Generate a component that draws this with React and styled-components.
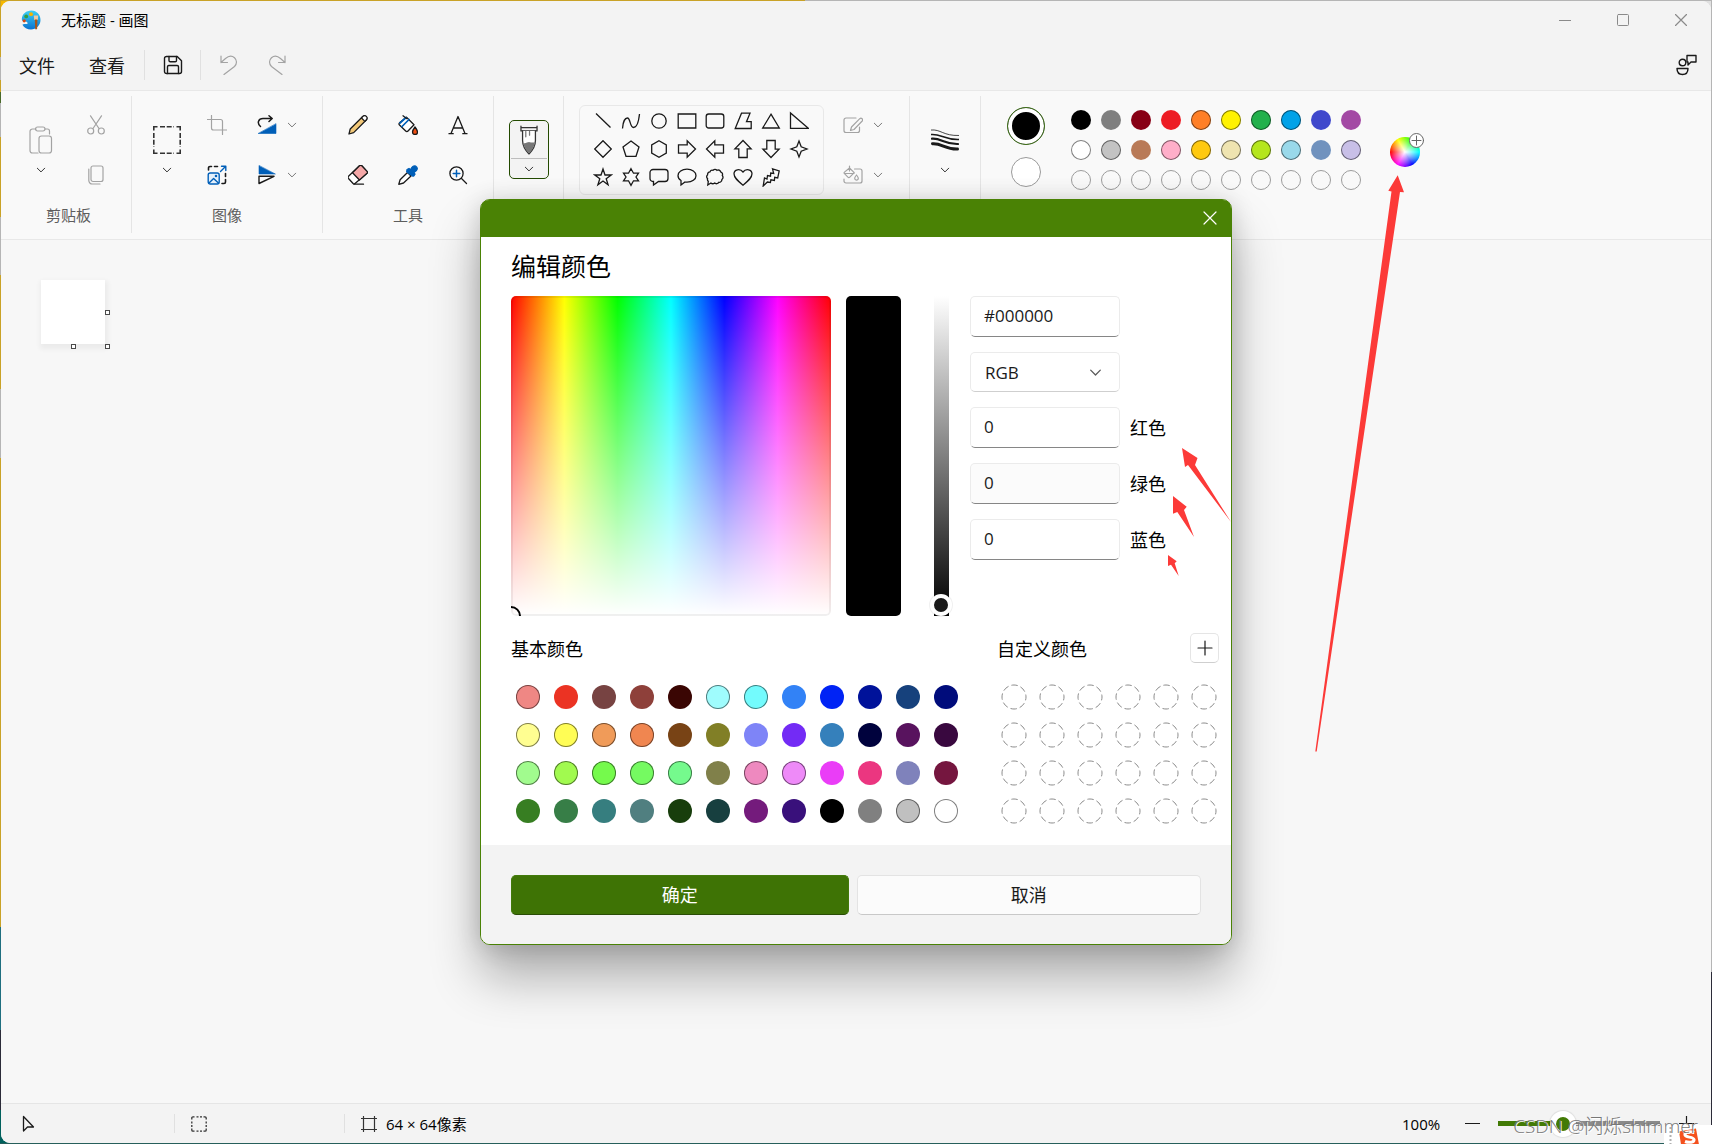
import React from "react";
import styled, { createGlobalStyle, css } from "styled-components";

const PALETTE = [
    "#000000", "#7f7f7f", "#880015", "#ed1c24", "#ff7f27", "#fff200", "#22b14c", "#00a2e8", "#3f48cc", "#a349a4",
    "#ffffff", "#c3c3c3", "#b97a57", "#ffaec9", "#ffc90e", "#efe4b0", "#b5e61d", "#99d9ea", "#7092be", "#c8bfe7"
]

const BASIC_COLORS = [
    "#ef8784", "#eb3323", "#774342", "#8e403a", "#3a0603", "#9ffcfd", "#73fbfd", "#3282f6", "#0023f5", "#00129a", "#16417c", "#000c7b",
    "#fffe91", "#fffd55", "#f09b59", "#f08650", "#784315", "#817f26", "#7e84f7", "#732bf5", "#3580bb", "#00023d", "#58135e", "#39083f",
    "#a1fb8e", "#a1fa4f", "#75fa4c", "#75fa61", "#75fa8d", "#80804a", "#ee89bf", "#ee8af8", "#ea3df7", "#eb3680", "#7f82bb", "#75163f",
    "#377e22", "#377e47", "#367e7f", "#507f80", "#183e0c", "#173f3f", "#741b7c", "#39107b", "#000000", "#808080", "#c0c0c0", "#ffffff"
]

// light swatches get an outline so they stay visible on the panel
const isLight = hex => {
    const [r, g, b] = [1, 3, 5].map(i => Math.pow(parseInt(hex.slice(i, i + 2), 16) / 255, 2.2))
    return 0.2126 * r + 0.7152 * g + 0.0722 * b > 0.3
}

const GlobalStyle = createGlobalStyle`
    *{
        box-sizing: border-box;
    }
    body{
        margin: 0;
        font-family: "Open Sans", "Noto Sans CJK SC", sans-serif;
        font-size: 15px;
        color: #1a1a1a;
    }
    button, input, select{
        font: inherit;
        color: inherit;
        margin: 0;
    }
    h1, h2, p{
        margin: 0;
        font-weight: inherit;
    }
    svg{
        display: block;
        flex: none;
    }
`

const Desktop = styled.div`
    position: relative;
    display: flex;
    min-height: 100vh;
    padding: 1px;
    overflow: hidden;
    background:
        linear-gradient(to right, #c9a227 47%, #b5b5b5 47%) top / 100% 1px no-repeat,
        linear-gradient(#1e5f5b, #2f5f5b) bottom / 100% 1px no-repeat,
        linear-gradient(#b5b5b5 0 85%, #2b2b38 85%) right / 1px 100% no-repeat,
        linear-gradient(#c9a227 0 5%, #b5b5b5 5% 7%, #c9a227 7% 8%, #4a6a2a 8% 9%, #b5b5b5 9% 12%, #c9a227 12% 19%, #b5b5b5 19% 24%, #c9a227 24% 34%, #b5b5b5 34% 40%, #c9a227 40% 81%, #1f6f7f 81% 90%, #2b2b38 90% 97%, #00605c 97%) left / 1px 100% no-repeat,
        linear-gradient(to right, #f5b800 50%, #e0e0e0 50%) top / 100% 20px no-repeat,
        #00605c;
`
const Window = styled.div`
    display: flex;
    flex-direction: column;
    flex: 1;
    border-radius: 9px;
    overflow: hidden;
    background: #f7f7f7;
`
const plainButton = css`
    display: flex;
    align-items: center;
    justify-content: center;
    padding: 0;
    border: none;
    background: none;
`
const TitleBar = styled.header`
    display: flex;
    align-items: center;
    height: 39px;
    padding: 0 1px 2px 20px;
    background: #f3f3f3;
`
const WindowTitle = styled.h1`
    flex: 1;
    padding-left: 20px;
    font-size: 15px;
    font-weight: 400;
    color: #000;
`
const CaptionButton = styled.button`
    ${plainButton}
    width: 58px;
    height: 36px;
`
const MenuBar = styled.nav`
    display: flex;
    align-items: center;
    height: 51px;
    padding: 0 14px 0 1px;
    background: #f3f3f3;
    border-bottom: 1px solid #e8e8e8;
`
const MenuButton = styled.button`
    ${plainButton}
    width: ${props => props.$width || 70}px;
    height: 40px;
    font-size: 18px;
`
const Spacer = styled.div`
    flex: 1;
`
const Divider = styled.span`
    width: 1px;
    height: ${props => props.$height}px;
    margin: 0 ${props => props.$after || 0}px 0 ${props => props.$before || 0}px;
    background: #e0e0e0;
`
const Ribbon = styled.section`
    display: flex;
    height: 149px;
    padding: 5px 0 6px;
    background: #f9f9f9;
    border-bottom: 1px solid #e8e8e8;
`
const Group = styled.div`
    display: flex;
    flex-direction: column;
    padding-top: 4px;
    border-right: ${props => props.$last ? "none" : "1px solid #e5e5e5"};
`
const GroupBody = styled.div`
    display: flex;
    height: 100px;
    padding: 0 ${props => props.$right}px 0 ${props => props.$left}px;
`
const GroupLabel = styled.p`
    margin-top: 3px;
    padding-left: ${props => props.$shift || 0}px;
    font-size: 15px;
    line-height: 24px;
    text-align: center;
    color: #5d5d5d;
`
const Column = styled.div`
    display: flex;
    flex-direction: column;
    align-items: center;
    gap: ${props => props.$gap || 0}px;
    padding-top: ${props => props.$top || 0}px;
    margin-left: ${props => props.$space || 0}px;
`
const ToolGrid = styled.div`
    display: grid;
    grid-template-columns: repeat(3, 50px);
`
const Tool = styled.button`
    ${plainButton}
    width: ${props => props.$width || 50}px;
    height: ${props => props.$height || 50}px;
`
const BrushButton = styled.button`
    ${plainButton}
    flex-direction: column;
    width: 40px;
    height: 59px;
    border: 1px solid #234a00;
    border-radius: 5px;
    background: #f3f3f3;
`
const BrushIcon = styled.span`
    display: flex;
    justify-content: center;
    align-items: center;
    flex: 1;
    width: 36px;
    border-bottom: 1px solid #bdbdbd;
`
const BrushArrow = styled.span`
    display: flex;
    justify-content: center;
    align-items: center;
    height: 19px;
`
const ShapeBox = styled.div`
    display: grid;
    grid-template-columns: repeat(8, 28px);
    grid-auto-rows: 28px;
    height: 90px;
    margin: 5px 12px 0 0;
    padding: 1px 10px 3px 9px;
    border: 1px solid #e8e8e8;
    border-radius: 6px;
`
const ShapeButton = styled.button`
    ${plainButton}
`
const ActiveColor = styled.button`
    ${plainButton}
    width: ${props => props.$size}px;
    height: ${props => props.$size}px;
    border-radius: 50%;
    background: ${props => props.$color};
    border: ${props => props.$selected ? "1px solid #3f6f1a" : "1px solid #9a9a9a"};
    box-shadow: ${props => props.$selected ? "inset 0 0 0 4px #fff" : "none"};
`
const Palette = styled.div`
    display: grid;
    grid-template-columns: repeat(10, 20px);
    grid-auto-rows: 20px;
    gap: 10px;
    margin: 10px 29px 0 26px;
`
const Swatch = styled.button`
    padding: 0;
    border: none;
    border-radius: 50%;
    background: ${props => props.$color};
    box-shadow: ${props => props.$outline ? "inset 0 0 0 1px rgba(0, 0, 0, 0.5)" : "none"};
`
const EmptySwatch = styled.button`
    padding: 0;
    border: 1px solid #9c9c9c;
    border-radius: 50%;
    background: none;
`
const ColorWheel = styled.button`
    position: relative;
    width: 30px;
    height: 30px;
    margin-top: 37px;
    padding: 0;
    border: none;
    border-radius: 50%;
    background:
        radial-gradient(circle, #fff 0, rgba(255, 255, 255, 0) 70%),
        conic-gradient(from 270deg, #f00, #ff0, #0f0, #0ff, #00f, #f0f, #f00);
`
const WheelBadge = styled.span`
    position: absolute;
    top: -4px;
    right: -4px;
`
const Workspace = styled.main`
    flex: 1;
    padding: 40px;
`
const Sheet = styled.div`
    position: relative;
    width: 64px;
    height: 64px;
    background: #fff;
    box-shadow: 1px 3px 5px 2px rgba(0, 0, 0, 0.05);
`
const Handle = styled.span`
    position: absolute;
    width: 5px;
    height: 5px;
    border: 1px solid #4a4a4a;
    background: #fff;
    ${props => props.$right ? "left: 64px;" : "left: 30px;"}
    ${props => props.$bottom ? "top: 64px;" : "top: 30px;"}
`
const StatusBar = styled.footer`
    display: flex;
    align-items: center;
    height: 40px;
    padding: 0 11px 0 0;
    background: #f3f3f3;
    border-top: 1px solid #e5e5e5;
    color: #000;
`
const StatusCell = styled.div`
    display: flex;
    align-items: center;
    gap: 9px;
    width: ${props => props.$width}px;
    padding-left: 16px;
`
const ZoomButton = styled.button`
    ${plainButton}
    width: 28px;
    height: 28px;
`
const ZoomText = styled.span`
    width: 56px;
`
const ZoomSlider = styled.input`
    appearance: none;
    width: 162px;
    height: 26px;
    margin: 0 12px;
    background: linear-gradient(to right, #427a05 38%, #8a8a8a 38%) center / 100% 5px no-repeat;
    border-radius: 3px;

    &::-webkit-slider-thumb{
        appearance: none;
        width: 26px;
        height: 26px;
        border: 6px solid #fff;
        border-radius: 50%;
        background: #427a05;
        box-shadow: 0 0 1px 1px rgba(0, 0, 0, 0.08);
    }
`
const Dialog = styled.section`
    position: absolute;
    top: 50%;
    left: 50%;
    width: 752px;
    transform: translate(-50%, -50%);
    border: 1px solid #4a8205;
    border-radius: 10px;
    background: #fff;
    box-shadow: 0 32px 50px rgba(0, 0, 0, 0.3), 0 2px 24px rgba(0, 0, 0, 0.16);
`
const DialogBar = styled.div`
    display: flex;
    justify-content: flex-end;
    height: 37px;
    padding-bottom: 2px;
    border-radius: 8px 8px 0 0;
    background: #4a8205;
`
const CloseButton = styled.button`
    ${plainButton}
    width: 42px;
`
const DialogBody = styled.div`
    padding: 12px 12px 22px 30px;
    font-size: 18px;
    color: #000;
`
const DialogTitle = styled.h2`
    margin-bottom: 13px;
    font-size: 25px;
    line-height: 34px;
`
const Picker = styled.div`
    display: flex;
    height: 320px;
`
const Spectrum = styled.div`
    position: relative;
    width: 320px;
    overflow: hidden;
    border-radius: 5px;
    background:
        linear-gradient(rgba(255, 255, 255, 0), #fff),
        linear-gradient(to right, #f00, #ff0, #0f0, #0ff, #00f, #f0f, #f00);
    box-shadow: inset 0 0 0 2px rgba(0, 0, 0, 0.06);
`
const SpectrumMarker = styled.span`
    position: absolute;
    left: -10px;
    bottom: -10px;
    width: 20px;
    height: 20px;
    border: 2px solid #000;
    border-radius: 50%;
`
const Preview = styled.div`
    width: 55px;
    margin: 0 29px 0 15px;
    border-radius: 5px;
    background: #000;
`
const ValueSlider = styled.input`
    appearance: none;
    writing-mode: vertical-lr;
    direction: rtl;
    width: 22px;
    height: 320px;
    background: linear-gradient(#fff, #000) center / 15px 100% no-repeat;

    &::-webkit-slider-thumb{
        appearance: none;
        width: 22px;
        height: 22px;
        border: 4px solid #fff;
        border-radius: 50%;
        background: #1a1a1a;
        box-shadow: 0 0 0 1px rgba(0, 0, 0, 0.06);
    }
`
const Fields = styled.div`
    display: flex;
    flex-direction: column;
    gap: 15px;
    margin-left: 18px;
`
const Field = styled.div`
    display: flex;
    align-items: center;
    gap: 10px;
`
const FieldLabel = styled.label`
    padding-bottom: 2px;
`
const fieldBox = css`
    width: 150px;
    border: 1px solid #ebebeb;
    border-radius: 5px;
    font-size: 17px;
    color: #1a1a1a;
`
const TextBox = styled.input`
    ${fieldBox}
    height: 41px;
    padding: 0 13px 3px;
    border-bottom-color: #868686;
    background: ${props => props.$hover ? "#fbfbfb" : "#fff"};
`
const ModelField = styled.div`
    position: relative;
    display: flex;
    align-items: center;
    width: 150px;
`
const ModelSelect = styled.select`
    ${fieldBox}
    appearance: none;
    height: 40px;
    padding: 0 14px;
    border-bottom-color: #cfcfcf;
    background: #fff;
`
const SelectArrow = styled.span`
    position: absolute;
    right: 18px;
    pointer-events: none;
`
const Collections = styled.div`
    display: flex;
    justify-content: space-between;
    margin-top: 18px;
`
const CollectionHead = styled.div`
    display: flex;
    align-items: center;
    justify-content: space-between;
    height: 30px;
    margin-bottom: 21px;
    padding-bottom: 2px;
`
const CustomCollection = styled.div`
    width: 222px;
`
const AddButton = styled.button`
    ${plainButton}
    width: 29px;
    height: 30px;
    border: 1px solid #e5e5e5;
    border-bottom-color: #cfcfcf;
    border-radius: 5px;
    background: #fff;
`
const SwatchGrid = styled.div`
    display: grid;
    grid-template-columns: repeat(${props => props.$columns}, 24px);
    grid-auto-rows: 24px;
    gap: 14px;
    padding-left: 5px;
`
const CustomSlot = styled.button`
    ${plainButton}
`
const DialogFooter = styled.div`
    display: grid;
    grid-template-columns: 49fr 50fr;
    gap: 8px;
    padding: 30px 30px 29px;
    border-radius: 0 0 9px 9px;
    background: #f3f3f3;
`
const DialogButton = styled.button`
    height: 40px;
    padding: 0 0 2px;
    border: 1px solid ${props => props.$primary ? "#427a0a" : "#e3e3e3"};
    border-bottom-color: ${props => props.$primary ? "#2a4c06" : "#c8c8c8"};
    border-radius: 5px;
    background: ${props => props.$primary ? "#3e7305" : "#fbfbfb"};
    color: ${props => props.$primary ? "#fff" : "#1a1a1a"};
    font-size: 18px;
`
const FieldArrows = styled.svg`
    position: absolute;
    top: 247px;
    right: -1px;
    pointer-events: none;
`
const WheelArrow = styled.svg`
    position: absolute;
    top: 175px;
    left: 1315px;
    pointer-events: none;
`
const Watermark = styled.span`
    position: absolute;
    right: 14px;
    bottom: 5px;
    font-size: 19px;
    font-weight: 300;
    line-height: 26px;
    color: #777;
    text-shadow: 1px 1px 0 #fff;
`
const ImeBar = styled.div`
    position: absolute;
    right: 0;
    bottom: 0;
    display: flex;
    width: 48px;
    height: 19px;
    padding-left: 5px;
    overflow: hidden;
    background: #fff;
`

const Icon = ({ size = 20, box = 20, color = "#1a1a1a", width = 1.2, children }) => (
    <svg width={size} height={size} viewBox={`0 0 ${box} ${box}`} fill="none" stroke={color} strokeWidth={width} strokeLinejoin="round" strokeLinecap="round" aria-hidden="true">
        {children}
    </svg>
)

const Chevron = ({ color = "#5a5a5a", size = 10 }) => (
    <Icon size={size} box={10} color={color} width={1}>
        <path d="M1.3 3.2 5 6.9l3.7-3.7" />
    </Icon>
)

const GREY = "#a3a3a3"
const BLUE = "#005fb8"

const PaintLogo = () => (
    <svg width="20" height="20" viewBox="0 0 20 20" aria-hidden="true">
        <defs>
            <linearGradient id="logo" x1="0" y1="0" x2="0" y2="1">
                <stop offset="0" stopColor="#3dd0f5" />
                <stop offset="1" stopColor="#0a72cf" />
            </linearGradient>
        </defs>
        <path d="M10.5.5C5 .5 1.200 4 .8 9c-.1 1.800 1.200 2.800 3 2.500 2-.3 3.200.7 2.600 2.600-1.800.2-4.400-.2-5 .6 1.600 3 4.800 4.800 8.600 4.800 5.200 0 9.500-4.300 9.500-9.500S15.700.5 10.500.5z" fill="url(#logo)" />
        <circle cx="10" cy="4.2" r="1.900" fill="#f7b500" />
        <circle cx="5.200" cy="6.400" r="1.900" fill="#2f9e44" />
        <circle cx="3.200" cy="10.800" r="1.600" fill="#d9480f" />
        <path d="M12.800 5.5h4.400l-.4 4.5h-3.600z" fill="#f1c9a0" />
        <path d="M13.800 9.500h2.600l-.3 9.800h-1.900z" fill="#a5561b" />
    </svg>
)

const SHAPES = [
    ["直线", <path d="m3 2.5 14.5 14" />],
    ["曲线", <path d="M1.5 17.5C2 10 4.5 7 6.5 7c3 0 2.3 9.500 6 9.500 4 0 5.500-9 6-13.500" />],
    ["椭圆形", <circle cx="10" cy="10" r="7.2" />],
    ["矩形", <path d="M1.2 3h17.600v14H1.200z" />],
    ["圆角矩形", <rect x="1.2" y="3" width="17.6" height="14" rx="2.5" />],
    ["多边形", <path d="M8.5 2.2H17l-3.500 8.500h4.700v6.800H2.200z" />],
    ["三角形", <path d="M10 3.2 18.300 17H1.700z" />],
    ["直角三角形", <path d="M1.5 2v15.300h17.800z" />],
    ["菱形", <path d="m10 1.700 8.300 8.300-8.300 8.300L1.700 10z" />],
    ["五边形", <path d="m10 2 8 6-3 9.300H5L2 8z" />],
    ["六边形", <path d="m10 1.700 7.300 4.200v8.200L10 18.300l-7.300-4.200V5.900z" />],
    ["右箭头", <path d="M1.5 5.800h8.700V1.900l8.300 8.100-8.300 8.100v-3.900H1.500z" />],
    ["左箭头", <path d="M18.5 5.800H9.800V1.900L1.500 10l8.300 8.100v-3.900h8.700z" />],
    ["上箭头", <path d="M5.800 18.500V9.800H1.900L10 1.500l8.100 8.300h-3.900v8.700z" />],
    ["下箭头", <path d="M5.800 1.500v8.700H1.900L10 18.500l8.100-8.300h-3.900V1.500z" />],
    ["四角星形", <path d="m10 2 2.200 5.800L18 10l-5.800 2.200L10 18l-2.200-5.800L2 10l5.800-2.200z" />],
    ["五角星形", <path d="m10 2 2 6h6.200l-5 3.700 1.900 6L10 14l-5.100 3.700 1.900-6-5-3.700H8z" />],
    ["六角星形", <path d="m10 1.700 2.500 4.500h5L15 10l2.500 3.800h-5L10 18.300l-2.500-4.500h-5L5 10 2.500 6.200h5z" />],
    ["圆角矩形标注", <path d="M4 2.500h12a3 3 0 0 1 3 3v6a3 3 0 0 1-3 3H9.500L4.500 18v-3.500H4a3 3 0 0 1-3-3v-6a3 3 0 0 1 3-3z" />],
    ["椭圆形标注", <path d="M10 2.200c5 0 9 2.800 9 6.500s-4 6.500-9 6.500c-.8 0-1.300 0-2-.2L4 18v-4.500c-1.900-1.200-3-2.900-3-4.800 0-3.700 4-6.500 9-6.500z" />],
    ["云形标注", <path d="M8 3.300c1-1.300 3-1.300 4 0 1.500-.8 3.200 0 3.600 1.500 1.600.5 2.400 2.200 1.700 3.700 1.100 1.200.9 3-.4 4 0 1.700-1.400 3-3.100 2.800-.9 1.500-2.900 1.900-4.200.8-1.300.9-2.700.8-3.700-.1L2.800 18l.5-3.700c-.8-.6-1-1.600-.7-2.500-1.100-1.200-1.100-2.900 0-4-.2-1.600.9-2.900 2.400-3 .5-1.200 1.800-1.900 3-1.500z" />],
    ["心形", <path d="M10 18.200C5 14 1 10.800 1 6.800 1 2.500 7 1 10 5c3-4 9-2.500 9 1.800 0 4-4 7.200-9 11.400z" />],
    ["闪电形", <path d="m11.500 1.800 6.700 2.200-1.500 7-3-.7-.3 3.200-3.500-.7-.5 2.700-3-.5-4.200 4 1.300-8 2.500 1 .5-3.500 3 .7.200-3.200 3 .5z" />]
]

const TOOLS = [
    ["铅笔", <path d="M1 19 2.200 14 14.500 1.800a2.300 2.300 0 0 1 3.500 3.500L5.700 17.600z" fill="#f2c879" />, <path d="m13.500 3 3.400 3.400 1.500-1.600a2.400 2.400 0 0 0-3.500-3.400z" fill="#fff" />],
    ["填充", <path d="M8.500 2.300 16 9.800l-6 6.200c-.7.700-1.600.7-2.300 0L1.500 10c-.6-.6-.6-1.500 0-2.200l7-5.500z" fill="#fff" />, <path d="m2 8 6-5.500M4 11.500l7-7" stroke={BLUE} strokeWidth="1.7" />, <path d="m5 .8 3.500 2.700" />, <path d="M17 12c1.500 2 2.500 3.500 2.500 5a2.500 2.500 0 0 1-5 0c0-1.500 1-3 2.500-5z" fill="#f04e12" />],
    ["文本", <path d="m3 18.500 7-17 7 17M5.200 13h9.600M1 18.700h4.200M14.800 18.700H19" />],
    ["橡皮擦", <path d="m11.500.8-11 10.500c-.6.600-.6 1.500 0 2.200l4.600 5c.6.600 1.300.6 1.900 0L19 8.200c.6-.6.6-1.200 0-1.800L13.800.8c-.7-.6-1.600-.6-2.300 0z" fill="#fff" />, <path d="m4.500 7.800 7-7c.7-.6 1.600-.6 2.300 0L19 6.400c.6.600.6 1.200 0 1.800L11.500 15z" fill="#f5a8a8" />, <path d="M6 19.200h9.500" />],
    ["颜色选取器", <path d="m9.500 7.500 3.500 3.500-7.500 7-4.700 1.300 1.300-4.600z" fill="#fff" />, <path d="m9 4.500 2-1 1.800 1.200c.7-3 3-4.500 5-3.500 2.300 1.300 2 4.500-1.800 6.200l1 1.800-1.200 1.800h-1.300L8.700 6.800z" fill={BLUE} stroke={BLUE} />],
    ["放大镜", <circle cx="8.500" cy="8.500" r="6.600" />, <path d="m13.500 13.500 5 5" />, <path d="M8.500 5.200v6.600M5.200 8.500h6.600" stroke={BLUE} strokeWidth="1.5" />]
]

const CHANNELS = [["red", "红色"], ["green", "绿色"], ["blue", "蓝色"]]

const RibbonBar = () => (
    <Ribbon>
        <Group>
            <GroupBody $left={15} $right={10}>
                <Column $top={20}>
                    <Tool $height={40} aria-label="粘贴">
                        <Icon size={28} box={28} color={GREY}>
                            <path d="M9 3H5.500A2.500 2.500 0 0 0 3 5.500v19A2.500 2.500 0 0 0 5.500 27H11M18 3h2.500a2 2 0 0 1 2 2v3" />
                            <rect x="8.5" y="1" width="9.5" height="4" rx="2" />
                            <rect x="12" y="10" width="12.5" height="17" rx="2.5" />
                        </Icon>
                    </Tool>
                    <Tool $height={20} aria-label="粘贴选项"><Chevron color="#333" /></Tool>
                </Column>
                <Column $space={5}>
                    <Tool aria-label="剪切">
                        <Icon color={GREY}>
                            <path d="M4.500.8 13 13.500M15.500.8 7 13.500" />
                            <circle cx="4.7" cy="16" r="3" />
                            <circle cx="15.3" cy="16" r="3" />
                        </Icon>
                    </Tool>
                    <Tool aria-label="复制">
                        <Icon color={GREY}>
                            <rect x="5" y="1" width="12" height="15.5" rx="2" />
                            <path d="M2.800 4v11.500A3.500 3.500 0 0 0 6.300 19H14" />
                        </Icon>
                    </Tool>
                </Column>
            </GroupBody>
            <GroupLabel $shift={5}>剪贴板</GroupLabel>
        </Group>
        <Group>
            <GroupBody $left={10} $right={22}>
                <Column $top={20}>
                    <Tool $height={40} aria-label="选择">
                        <svg width="28" height="28" viewBox="0 0 28 28" fill="none" stroke="#333" strokeWidth="1.6" aria-hidden="true">
                            <path d="M.8 4.500V.8h3.700M23.500.8h3.700v3.700M27.200 23.500v3.700h-3.700M4.500 27.200H.8v-3.700" />
                            <path d="M7 .8h14M7 27.200h14M.8 7v14M27.200 7v14" strokeDasharray="5 1.7" />
                        </svg>
                    </Tool>
                    <Tool $height={20} aria-label="选择选项"><Chevron color="#333" /></Tool>
                </Column>
                <Column>
                    <Tool aria-label="裁剪">
                        <Icon color={GREY}><path d="M4.500.5v12.500a2 2 0 0 0 2 2H19.500M.5 4.500H13.500a2 2 0 0 1 2 2V19.500" /></Icon>
                    </Tool>
                    <Tool aria-label="调整大小">
                        <Icon width={1.4}>
                            <path d="M1.500 5V3a1.500 1.500 0 0 1 1.500-1.500h1.500M7.500 1.500h3M18.500 8.500v3M18.500 14.500V17a1.500 1.500 0 0 1-1.500 1.500h-2" strokeWidth="1.6" />
                            <path d="M13.500 6.500l5-5M14.500 1.200h4.300v4.300" stroke={BLUE} />
                            <rect x="1.2" y="8" width="11" height="11" rx="2" stroke={BLUE} fill="#e4f0fb" />
                            <path d="m2 18 4.600-4.500 4.800 4.500" stroke={BLUE} />
                            <circle cx="9" cy="11" r=".6" stroke={BLUE} />
                        </Icon>
                    </Tool>
                </Column>
                <Column $space={8}>
                    <Tool $width={34} aria-label="旋转">
                        <Icon>
                            <path d="M3.500 11.500C-.5 8 1.500 3.500 6 3.500h9M12 .8l3.200 2.700L12 6.500" strokeWidth="1.5" />
                            <path d="M19 9v9.500H1.500z" fill={BLUE} stroke={BLUE} strokeWidth=".6" />
                        </Icon>
                    </Tool>
                    <Tool $width={34} aria-label="翻转">
                        <Icon>
                            <path d="M2 .8v8.200H18z" fill={BLUE} stroke={BLUE} strokeWidth=".6" />
                            <path d="M2 18.500V11.300H17z" strokeWidth="1.4" />
                        </Icon>
                    </Tool>
                </Column>
                <Column>
                    <Tool $width={16} aria-label="旋转选项"><Chevron color="#777" /></Tool>
                    <Tool $width={16} aria-label="翻转选项"><Chevron color="#777" /></Tool>
                </Column>
            </GroupBody>
            <GroupLabel>图像</GroupLabel>
        </Group>
        <Group>
            <GroupBody $left={10} $right={10}>
                <ToolGrid>
                    {TOOLS.map(([name, ...parts]) => (
                        <Tool key={name} aria-label={name}>
                            <Icon width={1.3}>
                                {parts.map((part, i) => <React.Fragment key={i}>{part}</React.Fragment>)}
                            </Icon>
                        </Tool>
                    ))}
                </ToolGrid>
            </GroupBody>
            <GroupLabel>工具</GroupLabel>
        </Group>
        <Group>
            <GroupBody $left={15} $right={14}>
                <Column $top={20}>
                    <BrushButton aria-label="画笔">
                        <BrushIcon>
                            <Icon size={30} box={28} color="#333">
                                <path d="M6.500 1v4.500h15V1M6.500 2.500h15" />
                                <path d="M8 5.500v9c0 4 2.500 9 6 12.500 3.500-3.500 6-8.500 6-12.500v-9" fill="#fff" />
                                <path d="M8.500 16.500c2 1.500 4-.8 6-.5s3 .8 5 0c-.3 3.500-2.500 7.500-5.500 10.500-3-3-5-6.500-5.500-10z" fill="#777" stroke="none" />
                                <path d="M11 6v5M14.500 6v3.500" stroke="#777" />
                            </Icon>
                        </BrushIcon>
                        <BrushArrow><Chevron color="#333" /></BrushArrow>
                    </BrushButton>
                </Column>
            </GroupBody>
        </Group>
        <Group>
            <GroupBody $left={15} $right={23}>
                <ShapeBox>
                    {SHAPES.map(([name, shape]) => (
                        <ShapeButton key={name} aria-label={name}>
                            <svg width="20" height="20" viewBox="0 0 20 20" fill="none" stroke="#1a1a1a" strokeWidth="1.3" aria-hidden="true">{shape}</svg>
                        </ShapeButton>
                    ))}
                </ShapeBox>
                <Column>
                    <Tool $width={34} aria-label="形状轮廓">
                        <Icon color={GREY}>
                            <path d="M13 3H3a2 2 0 0 0-2 2v10.500a2 2 0 0 0 2 2h11.500a2 2 0 0 0 2-2V12" />
                            <path d="m7.500 15.500 1-3.500 8.300-8.300c1.500-1.300 3.700.8 2.400 2.300L11 14.500z" />
                        </Icon>
                    </Tool>
                    <Tool $width={34} aria-label="形状填充">
                        <Icon color={GREY}>
                            <path d="M11.500 4H17a2 2 0 0 1 2 2v10a2 2 0 0 1-2 2H3a2 2 0 0 1-2-2v-2" />
                            <path d="m6.500 3 4.700 4.700-4.400 4.400c-.6.600-1.300.6-1.900 0L1.500 8.700c-.6-.6-.6-1 0-1.600zM6.500 1v5M1.500 8.500h9.500" />
                            <path d="M13.500 10c1.200 1.500 1.800 2.400 1.800 3.300a1.800 1.800 0 0 1-3.600 0c0-.9.600-1.800 1.800-3.300z" />
                        </Icon>
                    </Tool>
                </Column>
                <Column>
                    <Tool $width={16} aria-label="轮廓选项"><Chevron color="#777" /></Tool>
                    <Tool $width={16} aria-label="填充选项"><Chevron color="#777" /></Tool>
                </Column>
            </GroupBody>
        </Group>
        <Group>
            <GroupBody $left={10} $right={10}>
                <Column $top={20}>
                    <Tool $height={40} aria-label="粗细">
                        <Icon size={28} box={28}>
                            <path d="M0 4c10-1 12 6 28 5.500" strokeWidth=".8" />
                            <path d="M0 8.500c10-1 13 5.500 28 5" strokeWidth="1.5" />
                            <path d="M1 12.700c9-.8 13 5.800 26 5.300" strokeWidth="2.2" />
                            <path d="M1.500 17.700c9-.8 13 5.800 25 5.300" strokeWidth="3" />
                        </Icon>
                    </Tool>
                    <Tool $height={20} aria-label="粗细选项"><Chevron color="#333" /></Tool>
                </Column>
            </GroupBody>
        </Group>
        <Group $last>
            <GroupBody $left={26} $right={10}>
                <Column $top={7} $gap={12}>
                    <ActiveColor $size={38} $color="#000" $selected aria-label="颜色 1" />
                    <ActiveColor $size={30} $color="#fff" aria-label="颜色 2" />
                </Column>
                <Palette>
                    {PALETTE.map(color => <Swatch key={color} $color={color} $outline={isLight(color)} aria-label={color} />)}
                    {Array.from({ length: 10 }, (_, i) => <EmptySwatch key={i} aria-label="空" />)}
                </Palette>
                <ColorWheel aria-label="编辑颜色">
                    <WheelBadge>
                        <Icon size={15} box={15} color="#666" width={1}>
                            <circle cx="7.5" cy="7.5" r="7" fill="#fff" />
                            <path d="M7.500 3v9M3 7.500h9" />
                        </Icon>
                    </WheelBadge>
                </ColorWheel>
            </GroupBody>
        </Group>
    </Ribbon>
)

const ColorDialog = () => (
    <Dialog role="dialog" aria-labelledby="dialog-title">
        <DialogBar>
            <CloseButton aria-label="关闭对话框">
                <Icon size={14} box={14} color="#fff"><path d="m1 1 12 12M13 1 1 13" /></Icon>
            </CloseButton>
        </DialogBar>
        <DialogBody>
            <DialogTitle id="dialog-title">编辑颜色</DialogTitle>
            <Picker>
                <Spectrum><SpectrumMarker /></Spectrum>
                <Preview />
                <ValueSlider type="range" min="0" max="100" defaultValue="0" aria-label="亮度" />
                <Fields>
                    <TextBox type="text" defaultValue="#000000" aria-label="十六进制" />
                    <ModelField>
                        <ModelSelect defaultValue="RGB" aria-label="颜色模型">
                            <option>RGB</option>
                            <option>HSV</option>
                        </ModelSelect>
                        <SelectArrow><Chevron size={13} /></SelectArrow>
                    </ModelField>
                    {CHANNELS.map(([id, name]) => (
                        <Field key={id}>
                            <TextBox id={id} type="text" defaultValue="0" $hover={id === "green"} />
                            <FieldLabel htmlFor={id}>{name}</FieldLabel>
                        </Field>
                    ))}
                </Fields>
            </Picker>
            <Collections>
                <div>
                    <CollectionHead>基本颜色</CollectionHead>
                    <SwatchGrid $columns={12}>
                        {BASIC_COLORS.map(color => <Swatch key={color} $color={color} $outline={isLight(color)} aria-label={color} />)}
                    </SwatchGrid>
                </div>
                <CustomCollection>
                    <CollectionHead>
                        自定义颜色
                        <AddButton aria-label="添加到自定义颜色">
                            <Icon size={16} box={16}><path d="M8 1v14M1 8h14" /></Icon>
                        </AddButton>
                    </CollectionHead>
                    <SwatchGrid $columns={6}>
                        {Array.from({ length: 24 }, (_, i) => (
                            <CustomSlot key={i} aria-label="空">
                                <svg width="26" height="26" viewBox="0 0 26 26" aria-hidden="true">
                                    <circle cx="13" cy="13" r="12" fill="none" stroke="#8c8c8c" strokeDasharray="6.4 3.025" strokeDashoffset="3" />
                                </svg>
                            </CustomSlot>
                        ))}
                    </SwatchGrid>
                </CustomCollection>
            </Collections>
        </DialogBody>
        <DialogFooter>
            <DialogButton $primary>确定</DialogButton>
            <DialogButton>取消</DialogButton>
        </DialogFooter>
        <FieldArrows width="64" height="132" viewBox="1168 447 64 132" fill="#fc3a38" aria-hidden="true">
            <path d="m1182 448 15.500 10-2.500 7 36 57-43-57-3 2z" />
            <path d="m1173 496 13.700 10.700-2.700 3.300 10 27-16.700-25-4.300 1.700z" />
            <path d="m1168 555 8.700 6.300-2 2 4 12.700-7.700-11.300-3 1.300z" />
        </FieldArrows>
    </Dialog>
)

export default class App extends React.Component{

    state = {
        zoom: 38
    }
    onChangeZoom = e =>{
        this.setState({zoom: Number(e.target.value)})
    }

    render(){
        return(
            <Desktop>
                <GlobalStyle />
                <Window>
                    <TitleBar>
                        <PaintLogo />
                        <WindowTitle>无标题 - 画图</WindowTitle>
                        <CaptionButton aria-label="最小化">
                            <Icon size={12} box={12} color="#8a8a8a" width={1}><path d="M0 6.500h12" /></Icon>
                        </CaptionButton>
                        <CaptionButton aria-label="最大化">
                            <Icon size={12} box={12} color="#8a8a8a" width={1}><rect x=".5" y=".5" width="11" height="11" rx="1" /></Icon>
                        </CaptionButton>
                        <CaptionButton aria-label="关闭">
                            <Icon size={12} box={12} color="#8a8a8a"><path d="m.5.5 11 11M11.500.5l-11 11" /></Icon>
                        </CaptionButton>
                    </TitleBar>
                    <MenuBar>
                        <MenuButton>文件</MenuButton>
                        <MenuButton>查看</MenuButton>
                        <Divider $height={30} $before={2} />
                        <MenuButton $width={55} aria-label="保存">
                            <Icon width={1.4}>
                                <path d="M3.500 1.500h10.700l4.300 4.300v10.700a2 2 0 0 1-2 2h-13a2 2 0 0 1-2-2v-13a2 2 0 0 1 2-2z" />
                                <path d="M6 1.500v4c0 .8.500 1.300 1.300 1.300h4.900c.8 0 1.300-.5 1.300-1.300v-4M4.500 18.500v-6.700c0-.8.500-1.300 1.300-1.300h8.400c.8 0 1.300.5 1.300 1.300v6.700" />
                            </Icon>
                        </MenuButton>
                        <Divider $height={30} $after={4} />
                        <MenuButton $width={48} aria-label="撤销">
                            <Icon color={GREY}><path d="M2 1v6.500h6.500M2 7.500 6.500 3.500c3-2.700 6.500-3 9-.8 2.700 2.500 2.600 6.300 0 8.800L5 19.500" /></Icon>
                        </MenuButton>
                        <MenuButton $width={48} aria-label="重做">
                            <Icon color={GREY}><path d="M18 1v6.500h-6.500M18 7.500 13.500 3.500c-3-2.700-6.500-3-9-.8-2.700 2.500-2.600 6.300 0 8.800L15 19.500" /></Icon>
                        </MenuButton>
                        <Spacer />
                        <MenuButton $width={22} aria-label="反馈">
                            <Icon size={22} box={22} width={1.4}>
                                <circle cx="7.5" cy="8.5" r="3.3" />
                                <path d="M2 14.500h11c0 4-2.500 6-5.500 6s-5.500-2-5.500-6zM12 1.500h9v6.500h-5l-3 3v-3h-1z" />
                            </Icon>
                        </MenuButton>
                    </MenuBar>
                    <RibbonBar />
                    <Workspace>
                        <Sheet>
                            <Handle $right />
                            <Handle $bottom />
                            <Handle $right $bottom />
                        </Sheet>
                    </Workspace>
                    <StatusBar>
                        <StatusCell $width={173}>
                            <Icon width={1.3}><path d="M6.500 2.500v14.500l4-4h6z" /></Icon>
                        </StatusCell>
                        <Divider $height={19} />
                        <StatusCell $width={169}>
                            <svg width="16" height="16" viewBox="0 0 16 16" fill="none" stroke="#333" strokeWidth="1.3" aria-hidden="true">
                                <path d="M.8 3.500V2A1.200 1.200 0 0 1 2 .8h1.500M12.500.8H14A1.200 1.200 0 0 1 15.200 2v1.500M15.200 12.500V14a1.200 1.200 0 0 1-1.200 1.200h-1.500M3.500 15.200H2A1.200 1.200 0 0 1 .8 14v-1.500M5.500.8h2M9 .8h2M5.500 15.200h2M9 15.200h2M.8 5.500v2M.8 9v2M15.200 5.500v2M15.200 9v2" />
                            </svg>
                        </StatusCell>
                        <Divider $height={19} />
                        <StatusCell $width={200}>
                            <Icon size={16} box={16} color="#333"><path d="M2.500.5v15M13.500.5v15M.5 2.500h15M.5 13.500h15" /></Icon>
                            64 × 64像素
                        </StatusCell>
                        <Spacer />
                        <ZoomText>100%</ZoomText>
                        <ZoomButton aria-label="缩小"><Icon size={15} box={15}><path d="M0 7.500h15" /></Icon></ZoomButton>
                        <ZoomSlider type="range" min="0" max="100" value={this.state.zoom} onChange={this.onChangeZoom} aria-label="缩放" />
                        <ZoomButton aria-label="放大"><Icon size={15} box={15}><path d="M0 7.500h15M7.500 0v15" /></Icon></ZoomButton>
                    </StatusBar>
                </Window>
                <ColorDialog />
                <WheelArrow width="90" height="577" viewBox="1315 175 90 577" fill="#fc3a38" aria-hidden="true">
                    <path d="m1397.700 175.300 6.300 17-4-.3-83.300 559.500h-1.400L1391.500 191.500l-3.200-.8z" />
                </WheelArrow>
                <ImeBar>
                    <svg width="43" height="19" viewBox="0 0 43 19" aria-hidden="true">
                        <path d="M1.500 2v17" stroke="#b0b0b0" strokeWidth="2" strokeDasharray="2 2" />
                        <path d="m10 6.500 17-3 3 16H12z" fill="#f4511e" />
                        <path d="M25 7.500c-4-1.500-9.500-.5-9 2.500.4 2.700 8.500 1.500 9 4.500.4 3-5 3.500-9 2" fill="none" stroke="#fff" strokeWidth="3" />
                    </svg>
                </ImeBar>
                <Watermark>CSDN @闪烁shimmer</Watermark>
            </Desktop>
        )
    }
}
